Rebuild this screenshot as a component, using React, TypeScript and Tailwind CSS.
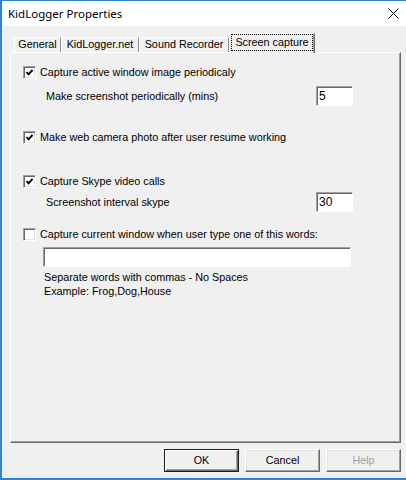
import React from 'react'

const ui = { fontFamily: '"Liberation Sans", Arial, sans-serif' }

function Check({ checked }: { checked?: boolean }) {
  return (
    <div className="w-[13px] h-[13px] shrink-0 bg-white border border-t-[#a0a0a0] border-l-[#a0a0a0] border-b-white border-r-white shadow-[inset_1px_1px_0_#696969,inset_-1px_-1px_0_#e3e3e3] flex items-center justify-center">
      {checked && (
        <svg width="9" height="9" viewBox="0 0 9 9">
          <polyline points="1.5,4 3.5,6.3 7.5,2" fill="none" stroke="#000" strokeWidth="1.9" />
        </svg>
      )}
    </div>
  )
}

function Field({ value, className }: { value?: string; className: string }) {
  return (
    <div className={`bg-white border border-t-[#a0a0a0] border-l-[#a0a0a0] border-b-white border-r-white shadow-[inset_1px_1px_0_#696969] flex items-center pl-[2px] text-black ${className}`}>
      {value}
    </div>
  )
}

function Btn({ label, isDefault, disabled }: { label: string; isDefault?: boolean; disabled?: boolean }) {
  return (
    <div
      className={`w-[75px] h-[23px] flex items-center justify-center bg-[#f0f0f0] ${
        isDefault
          ? 'border border-[#1a1a1a] shadow-[inset_1px_1px_0_#fff,inset_-1px_-1px_0_#696969,inset_-2px_-2px_0_#a0a0a0]'
          : 'border border-t-white border-l-white border-r-[#696969] border-b-[#696969] shadow-[inset_-1px_-1px_0_#a0a0a0,inset_1px_1px_0_#e3e3e3]'
      } ${disabled ? 'text-[#a0a0a0]' : 'text-black'}`}
    >
      {label}
    </div>
  )
}

export default function App() {
  const tabs = [
    { label: 'General', w: 'w-[47px]' },
    { label: 'KidLogger.net', w: 'w-[78px]' },
    { label: 'Sound Recorder', w: 'w-[90px]' },
  ]

  return (
    <div className="w-[406px] h-[480px] flex flex-col bg-[#f0f0f0] border-t border-t-[#2b87d3] border-l-2 border-l-[#2b87d3] border-b-2 border-b-[#2b87d3] overflow-hidden text-[10.8px] text-black" style={ui}>
      {/* Title bar */}
      <div className="h-[25px] bg-white flex items-center justify-between pl-[6px] pr-[7px] shrink-0">
        <span className="text-[11.5px] text-black" style={{ fontFamily: '"Noto Sans", "Open Sans", sans-serif' }}>
          KidLogger Properties
        </span>
        <svg width="11" height="11" viewBox="0 0 11 11">
          <path d="M0.5 0.5 L10.5 10.5 M10.5 0.5 L0.5 10.5" stroke="#000" strokeWidth="1" />
        </svg>
      </div>

      <div className="flex-1 flex flex-col pt-[7px] pl-[8px] pr-[5px] pb-[6px]">
        {/* Tabs */}
        <div className="h-[19px] flex items-end pl-[4px] relative z-10">
          {tabs.map(t => (
            <div
              key={t.label}
              className={`${t.w} h-[15px] flex items-center justify-center pb-[1px] border-t border-l border-t-white border-l-white border-r border-r-[#8c8c8c] text-black`}
            >
              {t.label}
            </div>
          ))}
          <div className="w-[86px] h-[20px] -mb-[1px] bg-[#f0f0f0] flex items-start justify-center border-t border-l border-t-white border-l-white border-r border-r-[#696969] shadow-[inset_-1px_0_0_#a0a0a0]">
            <span className="h-[17px] px-[3px] flex items-center border border-dotted border-black">
              Screen capture
            </span>
          </div>
        </div>

        {/* Panel */}
        <div className="h-[391px] flex flex-col border border-t-white border-l-white border-r-[#696969] border-b-[#696969] shadow-[inset_-1px_-1px_0_#a0a0a0] pl-[12px] pt-[11px]">
          <div className="h-[16px] flex items-center gap-[4px]">
            <Check checked />
            <span>Capture active window image periodicaly</span>
          </div>
          <div className="mt-[6px] h-[20px] flex items-center pl-[23px]">
            <span className="w-[270px]">Make screenshot periodically (mins)</span>
            <Field value="5" className="w-[37px] h-[20px] text-[12px]" />
          </div>

          <div className="mt-[23px] h-[16px] flex items-center gap-[4px]">
            <Check checked />
            <span>Make web camera photo after user resume working</span>
          </div>

          <div className="mt-[28px] h-[16px] flex items-center gap-[4px]">
            <Check checked />
            <span>Capture Skype video calls</span>
          </div>
          <div className="mt-[3px] h-[20px] flex items-center pl-[23px]">
            <span className="w-[270px]">Screenshot interval skype</span>
            <Field value="30" className="w-[37px] h-[20px] text-[12px]" />
          </div>

          <div className="mt-[14px] h-[16px] flex items-center gap-[4px]">
            <Check />
            <span>Capture current window when user type one of this words:</span>
          </div>
          <div className="mt-[5px] pl-[20px]">
            <Field className="w-[308px] h-[20px]" />
          </div>
          <div className="mt-[3px] pl-[21px] leading-[14px]">
            <div>Separate words with commas - No Spaces</div>
            <div>Example: Frog,Dog,House</div>
          </div>
        </div>

        {/* Buttons */}
        <div className="mt-[6px] flex justify-end gap-[6px]">
          <Btn label="OK" isDefault />
          <Btn label="Cancel" />
          <Btn label="Help" disabled />
        </div>
      </div>
    </div>
  )
}
